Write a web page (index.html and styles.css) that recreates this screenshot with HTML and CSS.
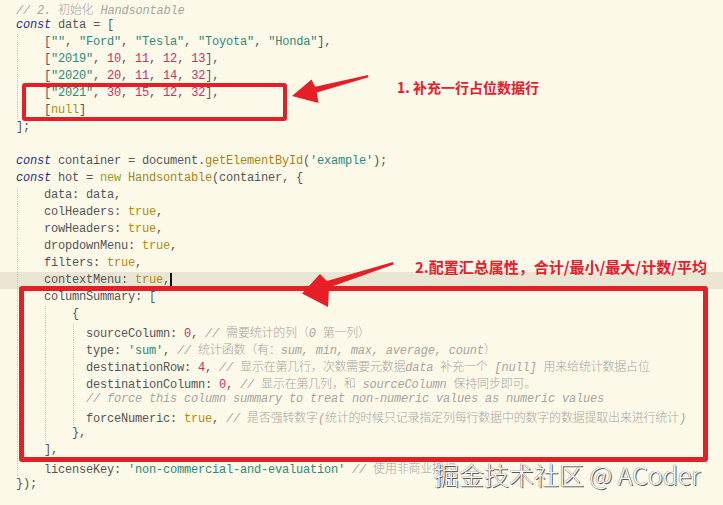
FILE: index.html
```html
<!DOCTYPE html>
<html lang="zh">
<head>
<meta charset="utf-8">
<link rel="stylesheet" href="styles.css">
</head>
<body>
<div class="editor">
  <div class="code">
    <div class="ln"><span class="c">// 2. <span class="cj">初始化</span> Handsontable</span></div>
    <div class="ln"><span class="k">const</span> data = [</div>
    <div class="ln"><span class="ind"></span>[<span class="s">""</span>, <span class="s">"Ford"</span>, <span class="s">"Tesla"</span>, <span class="s">"Toyota"</span>, <span class="s">"Honda"</span>],</div>
    <div class="ln"><span class="ind"></span>[<span class="s">"2019"</span>, <span class="n">10</span>, <span class="n">11</span>, <span class="n">12</span>, <span class="n">13</span>],</div>
    <div class="ln"><span class="ind"></span>[<span class="s">"2020"</span>, <span class="n">20</span>, <span class="n">11</span>, <span class="n">14</span>, <span class="n">32</span>],</div>
    <div class="ln"><span class="ind"></span>[<span class="s">"2021"</span>, <span class="n">30</span>, <span class="n">15</span>, <span class="n">12</span>, <span class="n">32</span>],</div>
    <div class="ln"><span class="ind"></span>[<span class="b">null</span>]</div>
    <div class="ln">];</div>
    <div class="ln"></div>
    <div class="ln"><span class="k">const</span> container = document.<span class="f">getElementById</span>(<span class="s">'example'</span>);</div>
    <div class="ln"><span class="k">const</span> hot = <span class="nw">new</span> <span class="f">Handsontable</span>(container, {</div>
    <div class="ln"><span class="ind"></span>data: data,</div>
    <div class="ln"><span class="ind"></span>colHeaders: <span class="b">true</span>,</div>
    <div class="ln"><span class="ind"></span>rowHeaders: <span class="b">true</span>,</div>
    <div class="ln"><span class="ind"></span>dropdownMenu: <span class="b">true</span>,</div>
    <div class="ln"><span class="ind"></span>filters: <span class="b">true</span>,</div>
    <div class="ln hl"><span class="ind"></span>contextMenu: <span class="b">true</span>,<span class="cursor"></span></div>
    <div class="ln"><span class="ind"></span>columnSummary: [</div>
    <div class="ln"><span class="ind"></span><span class="ind"></span>{</div>
    <div class="ln"><span class="ind"></span><span class="ind"></span><span class="ind half"></span>sourceColumn: <span class="n">0</span>, <span class="c">// <span class="cj">需要统计的列（</span>0 <span class="cj">第一列）</span></span></div>
    <div class="ln"><span class="ind"></span><span class="ind"></span><span class="ind half"></span>type: <span class="s">'sum'</span>, <span class="c">// <span class="cj">统计函数（有：</span>sum, min, max, average, count<span class="cj">）</span></span></div>
    <div class="ln"><span class="ind"></span><span class="ind"></span><span class="ind half"></span>destinationRow: <span class="n">4</span>, <span class="c">// <span class="cj">显示在第几行，次数需要元数据</span>data <span class="cj">补充一个</span> [null] <span class="cj">用来给统计数据占位</span></span></div>
    <div class="ln"><span class="ind"></span><span class="ind"></span><span class="ind half"></span>destinationColumn: <span class="n">0</span>, <span class="c">// <span class="cj">显示在第几列，和</span> sourceColumn <span class="cj">保持同步即可。</span></span></div>
    <div class="ln"><span class="ind"></span><span class="ind"></span><span class="ind half"></span><span class="c">// force this column summary to treat non-numeric values as numeric values</span></div>
    <div class="ln"><span class="ind"></span><span class="ind"></span><span class="ind half"></span>forceNumeric: <span class="b">true</span>, <span class="c">// <span class="cj">是否强转数字</span>(<span class="cj">统计的时候只记录指定列每行数据中的数字的数据提取出来进行统计</span>)</span></div>
    <div class="ln"><span class="ind"></span><span class="ind"></span>},</div>
    <div class="ln"><span class="ind"></span>],</div>
    <div class="ln"><span class="ind"></span>licenseKey: <span class="s">'non-commercial-and-evaluation'</span> <span class="c">// <span class="cj">使用非商业授权</span></span></div>
    <div class="ln">});</div>
  </div>

  <div class="box box1"></div>
  <div class="box box2"></div>

  <svg class="arrows" width="723" height="505" viewBox="0 0 723 505">
    <polygon points="368,75 315.2,86.7 311.5,79.5 292,96 318.5,103 316.8,92.5 368.5,77.3" fill="#e61f27"/>
    <polygon points="393,262 326.9,281 320,274 302,293.5 328,307 329.1,287.6 393.5,264.5" fill="#e61f27"/>
  </svg>

  <div class="note note1">1. 补充一行占位数据行</div>
  <div class="note note2">2.配置汇总属性，合计/最小/最大/计数/平均</div>

  <div class="watermark">掘金技术社区 @ ACoder</div>
</div>
</body>
</html>
```

FILE: styles.css
```css
html, body {
  margin: 0;
  padding: 0;
  background: #fdf9e9;
}

.editor {
  position: relative;
  width: 723px;
  height: 505px;
  overflow: hidden;
  background: #fdf9e9;
}

.code {
  display: flex;
  flex-direction: column;
  font-family: "Liberation Mono", "Noto Sans CJK SC", monospace;
  font-size: 12px;
  letter-spacing: -0.2px;
  color: #555555;
}

.ln {
  height: 17px;
  line-height: 17px;
  padding-left: 16px;
  white-space: pre;
}

.ln.hl {
  background: #ebe6d3;
}

.ind {
  display: inline-block;
  width: 28px;
  height: 17px;
  vertical-align: top;
  background-image: linear-gradient(#c9c6bb 50%, transparent 50%);
  background-size: 1px 2px;
  background-position: 1px 0;
  background-repeat: repeat-y;
}

.ind.half {
  width: 14px;
}

.cursor {
  display: inline-block;
  width: 2px;
  height: 15px;
  margin-top: 1px;
  vertical-align: top;
  background: #111;
}

.k { color: #29308a; font-style: italic; }
.s { color: #2a8a78; }
.n { color: #c4306a; }
.b { color: #b08c0c; }
.f { color: #a28418; }
.nw { color: #93a01e; }
.c { color: #a6a49e; font-style: italic; }
.cj {
  font-style: normal;
  font-family: "Noto Sans CJK SC", sans-serif;
  font-weight: 300;
  letter-spacing: -0.2px;
}

.box {
  position: absolute;
  border: 4px solid #e61f27;
  border-radius: 3px;
  box-sizing: border-box;
}

.box1 {
  left: 22px;
  top: 83px;
  width: 265px;
  height: 38px;
}

.box2 {
  left: 19px;
  top: 286px;
  width: 689px;
  height: 176px;
  border-width: 5px;
}

.arrows {
  position: absolute;
  left: 0;
  top: 0;
}

.note {
  position: absolute;
  font-family: "Noto Sans CJK SC", "Noto Sans", sans-serif;
  font-weight: 700;
  color: #e3202a;
  white-space: nowrap;
  text-shadow: 0 0 2px #fde3e3;
}

.note1 {
  left: 397px;
  top: 78px;
  font-size: 14px;
  line-height: 18px;
}

.note2 {
  left: 415px;
  top: 257px;
  font-size: 15px;
  line-height: 20px;
}

.watermark {
  position: absolute;
  left: 434px;
  top: 460px;
  font-family: "Noto Sans CJK SC", "Noto Sans", sans-serif;
  font-size: 25px;
  font-weight: 300;
  line-height: 28px;
  color: #fbfbfb;
  white-space: nowrap;
  text-shadow: 1px 1px 0 #5a5a5a, -0.5px -0.5px 0 #9a9a9a, 0 0 1px #777;
}
```
